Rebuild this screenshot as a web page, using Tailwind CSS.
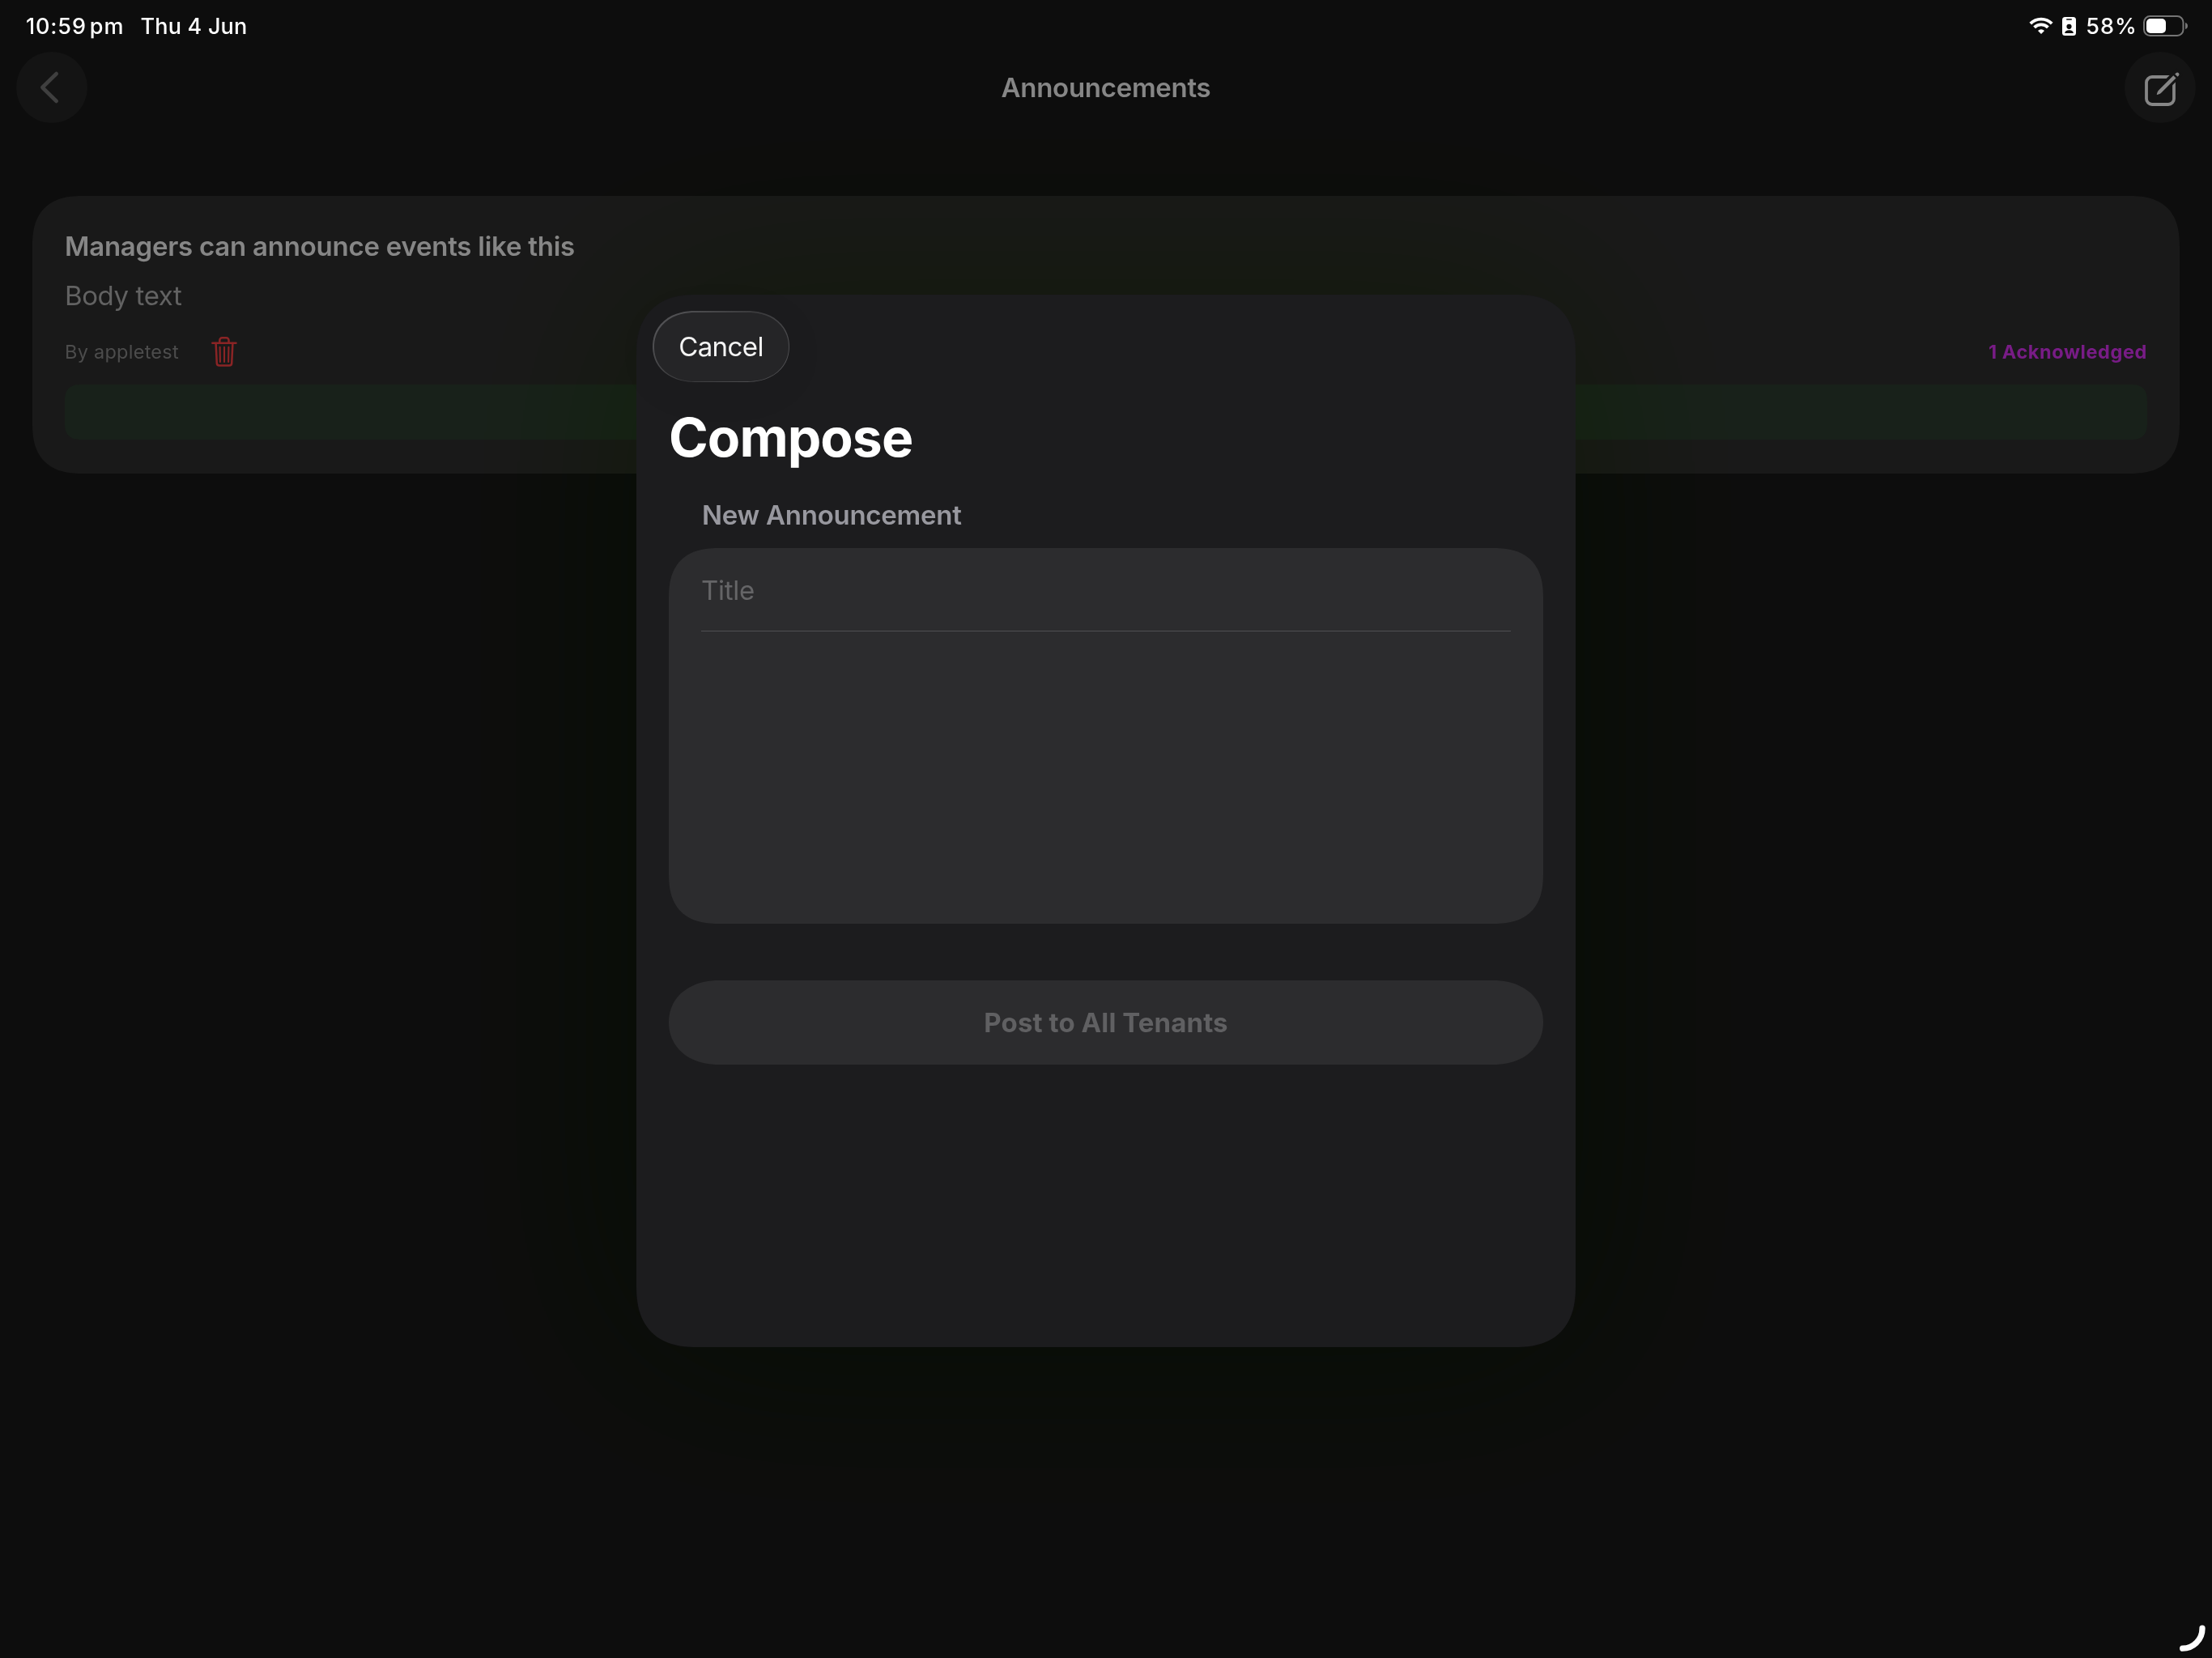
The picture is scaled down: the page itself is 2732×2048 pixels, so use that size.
<!DOCTYPE html>
<html lang="en">
<head>
  <meta charset="UTF-8">
  <meta name="viewport" content="width=device-width, initial-scale=1.0">
  <title>Announcements</title>
  <script src="https://cdn.jsdelivr.net/npm/@tailwindcss/browser@4"></script>
</head>
<body class="bg-[#0d0d0d] font-['Inter',sans-serif] overflow-hidden">
  <div class="relative w-[2732px] h-[2048px] overflow-hidden">

    <!-- Status bar -->
    <div class="flex items-center justify-between h-16 pl-8 pr-[30px] text-[27px] font-medium text-white">
      <div class="flex items-center pt-0.5">
        <span class="tracking-[0.85px]">10:59</span>
        <span class="ml-1 tracking-[1px]">pm</span>
        <span class="ml-5 tracking-[0.2px]">Thu 4 Jun</span>
      </div>
      <div class="flex items-center">
        <svg class="w-[30px] h-6" viewBox="0 0 30 24" fill="none" stroke="#fff" stroke-width="3.9">
          <path d="M1.8 9.1a18.6 18.6 0 0 1 26.4 0"/>
          <path d="M6.6 13.9a11.8 11.8 0 0 1 16.8 0"/>
          <path d="M15 22l-4-4a5.7 5.7 0 0 1 8 0z" fill="#fff" stroke="none"/>
        </svg>
        <svg class="ml-[11px] w-[17px] h-6" viewBox="0 0 17 24">
          <rect y="1" width="17" height="23" rx="3.5" fill="#fff"/>
          <rect x="5" y="3.2" width="7" height="1.5" rx=".7" fill="#0d0d0d"/>
          <circle cx="8.5" cy="12.8" r="3.1" fill="#0d0d0d"/>
          <path d="M3.2 21c0-2.6 2.3-3.8 5.3-3.8s5.3 1.2 5.3 3.8z" fill="#0d0d0d"/>
        </svg>
        <span class="ml-3 pt-0.5 tracking-[1.1px]">58%</span>
        <svg class="ml-[6px] w-14 h-[26px]" viewBox="0 0 56 26">
          <rect x="2" y="1" width="48.5" height="24" rx="7.5" fill="none" stroke="#757575" stroke-width="2"/>
          <rect x="5" y="4" width="24" height="18" rx="5" fill="#fff"/>
          <path d="M53 9c2 .6 3 2 3 4s-1 3.4-3 4z" fill="#757575"/>
        </svg>
      </div>
    </div>

    <!-- Nav bar -->
    <header class="flex items-center justify-between h-[88px] px-5">
      <button class="size-[88px] rounded-full bg-[#141414]">
        <svg class="size-[88px]" viewBox="0 0 88 88" fill="none" stroke="#3f3f3f" stroke-width="4.6" stroke-linecap="round" stroke-linejoin="round">
          <path d="M49.7 27L32.3 44l17.4 17"/>
        </svg>
      </button>
      <h1 class="pt-0.5 text-[33px] font-semibold tracking-[-0.28px] text-[#868686]">Announcements</h1>
      <button class="size-[88px] rounded-full bg-[#141414]">
        <svg class="size-[88px]" viewBox="0 0 88 88" fill="none">
          <path d="M57 31H34a7 7 0 0 0-7 7v20a7 7 0 0 0 7 7h20a7 7 0 0 0 7-7V35" stroke="#868686" stroke-width="3.8"/>
          <path d="M48 44.5L68 24.5" stroke="#141414" stroke-width="11"/>
          <path d="M39.8 52.5c.6-2.6 1.4-4.1 2.8-5.5L60.3 29.3l3.2 3.2L45.7 50.2c-1.4 1.4-3 2.3-5.4 2.8-.4.1-.6-.1-.5-.5z" fill="#868686"/>
          <path d="M62.2 27.6l1.4-1.4a2.25 2.25 0 0 1 3.2 3.2l-1.4 1.4z" fill="#868686"/>
        </svg>
      </button>
    </header>

    <!-- Announcement card -->
    <main class="px-10 pt-[90px]">
      <article class="bg-[#191919] rounded-[63px] [corner-shape:superellipse(1.35)] px-10 pt-[42px] pb-[42px]">
        <h2 class="text-[33px] leading-10 font-semibold tracking-[-0.24px] text-[#868686]">Managers can announce events like this</h2>
        <p class="mt-[21px] text-[33px] leading-10 tracking-[-0.4px] text-[#626262]">Body text</p>
        <div class="mt-[30px] h-10 flex items-center">
          <span class="text-[23.5px] tracking-[0.26px] text-[#4c4c4c]">By appletest</span>
          <svg class="ml-[39px] w-[34px] h-10" viewBox="0 0 34 40" fill="none" stroke="#8a2425" stroke-width="2.5" stroke-linecap="round" stroke-linejoin="round">
            <path d="M2.3 8.8h29.2"/>
            <path d="M11.3 8.5V5.2a3 3 0 0 1 3-3h5.2a3 3 0 0 1 3 3v3.3"/>
            <path d="M6.6 9l1.2 24.6a3 3 0 0 0 3 2.9h12.4a3 3 0 0 0 3-2.9L27.4 9"/>
            <path d="M11.6 13.8l.3 18.2M17 13.8V32M22.4 13.8l-.3 18.2" stroke-width="2.1"/>
          </svg>
          <span class="ml-auto text-[23.5px] font-bold tracking-[0.6px] text-[#781c86]">1 Acknowledged</span>
        </div>
        <div class="mt-5 h-[68px] rounded-[20px] [corner-shape:superellipse(1.35)] bg-[#18211a]"></div>
      </article>
    </main>

    <!-- Ambient shadow round the sheet -->
    <div class="absolute left-[786px] top-[364px] w-[1160px] h-[1300px] rounded-[64px] mix-blend-difference shadow-[0_0_250px_rgb(9,2,18)]"></div>

    <!-- Compose sheet -->
    <section class="absolute left-[786px] top-[364px] w-[1160px] h-[1300px] bg-[#1c1c1e] rounded-[78px] [corner-shape:superellipse(1.35)] pt-5">
      <div class="ml-5 w-[169px] h-[88px] p-[1.5px] rounded-[52px/44px] [corner-shape:superellipse(1.1)] bg-linear-[135deg,#58585b_0%,#3a3a3c_50%,#58585b_100%] shadow-[0_8px_60px_rgba(0,0,0,0.05)]">
        <button class="w-full h-full pt-0.5 rounded-[50.5px/42.5px] [corner-shape:superellipse(1.1)] bg-[#252527] text-[33px] tracking-[-0.6px] text-white/95">Cancel</button>
      </div>
      <div class="px-10">
        <h2 class="mt-7 text-[66px] leading-[80px] font-bold tracking-[-0.95px] text-white">Compose</h2>
        <h3 class="mt-9 ml-[41px] text-[33px] leading-10 font-semibold tracking-[-0.26px] text-[#98989f]">New Announcement</h3>
        <div class="mt-[21px] h-[464px] px-10 rounded-[63px] [corner-shape:superellipse(1.35)] bg-[#2c2c2e]">
          <div class="h-[103px] pt-[3px] flex items-center border-b border-[#4f4f52] text-[33px] tracking-[-0.25px] text-[#656567]">Title</div>
        </div>
        <button class="mt-[70px] w-full h-[104px] pt-0.5 rounded-[62px/52px] [corner-shape:superellipse(1.1)] bg-[#2c2c2e] text-[33px] font-bold tracking-[0.09px] text-[#606062]">Post to All Tenants</button>
      </div>
    </section>

    <!-- Corner handle -->
    <svg class="absolute right-0 bottom-0 w-[50px] h-[50px]" viewBox="0 0 50 50" fill="none">
      <path d="M38 13.2A24.5 24.5 0 0 1 13.7 38.2" stroke="#fff" stroke-width="7.3" stroke-linecap="round"/>
    </svg>
  </div>
</body>
</html>
